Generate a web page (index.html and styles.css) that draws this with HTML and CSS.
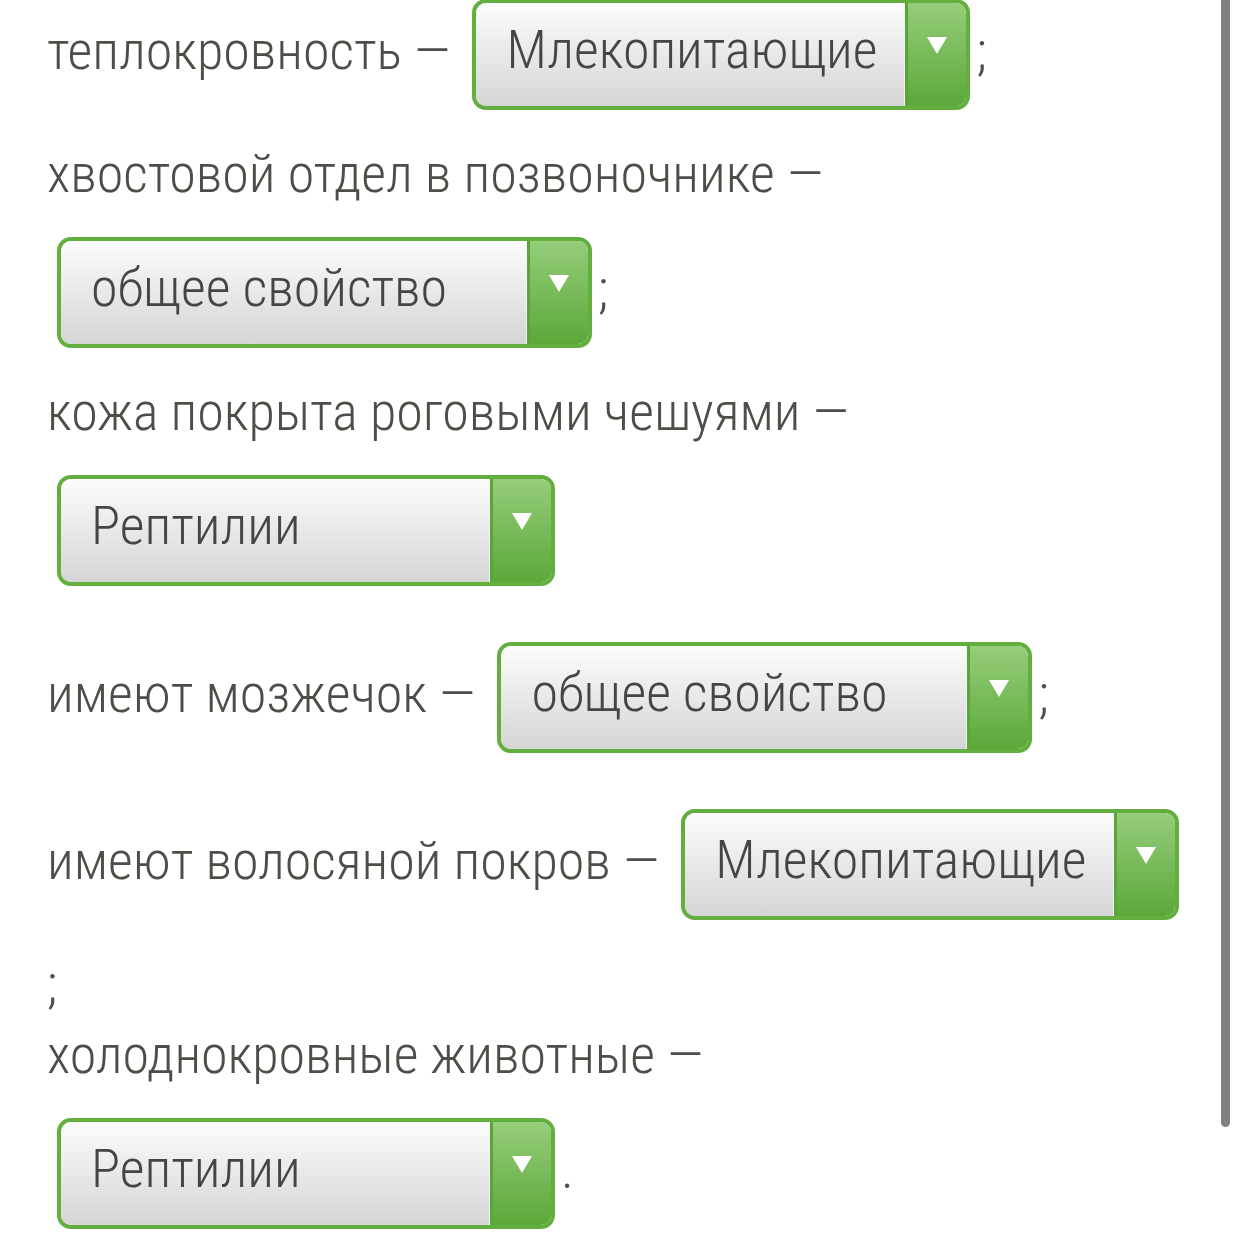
FILE: index.html
```html
<!DOCTYPE html>
<html lang="ru">
<head>
<meta charset="utf-8">
<title>Классы позвоночных</title>
<link rel="stylesheet" href="styles.css">
</head>
<body>
<div class="page">
  <div class="item">теплокровность — <span class="sel"><span class="sel-val">Млекопитающие</span><span class="sel-btn"><svg class="arrow" width="20" height="17" viewBox="0 0 20 17"><polygon points="0,0 20,0 10,17"/></svg></span></span>;</div>
  <div class="item">хвостовой отдел в позвоночнике — <span class="sel sel-wide"><span class="sel-val">общее свойство</span><span class="sel-btn"><svg class="arrow" width="20" height="17" viewBox="0 0 20 17"><polygon points="0,0 20,0 10,17"/></svg></span></span>;</div>
  <div class="item">кожа покрыта роговыми чешуями — <span class="sel"><span class="sel-val">Рептилии</span><span class="sel-btn"><svg class="arrow" width="20" height="17" viewBox="0 0 20 17"><polygon points="0,0 20,0 10,17"/></svg></span></span></div>
  <div class="item">имеют мозжечок — <span class="sel sel-wide"><span class="sel-val">общее свойство</span><span class="sel-btn"><svg class="arrow" width="20" height="17" viewBox="0 0 20 17"><polygon points="0,0 20,0 10,17"/></svg></span></span>;</div>
  <div class="item">имеют волосяной покров — <span class="sel"><span class="sel-val">Млекопитающие</span><span class="sel-btn"><svg class="arrow" width="20" height="17" viewBox="0 0 20 17"><polygon points="0,0 20,0 10,17"/></svg></span></span>;</div>
  <div class="item">холоднокровные животные — <span class="sel"><span class="sel-val">Рептилии</span><span class="sel-btn"><svg class="arrow" width="20" height="17" viewBox="0 0 20 17"><polygon points="0,0 20,0 10,17"/></svg></span></span>.</div>
</div>
<div class="scrollbar"></div>
</body>
</html>
```

FILE: styles.css
```css
html, body {
  margin: 0;
  padding: 0;
  background: #ffffff;
  overflow: hidden;
  height: 100%;
}

.page {
  margin-top: -29px;
  padding-left: 47px;
  width: 1145px;
  font-family: "Roboto Condensed", "Roboto", "Liberation Sans Narrow", sans-serif;
  font-stretch: 75%;
  font-weight: 300;
  font-size: 54px;
  line-height: 71px;
  color: #4d4e47;
}

.item {
  margin: 0;
}

.sel {
  display: inline-flex;
  vertical-align: middle;
  box-sizing: border-box;
  width: 498px;
  height: 111px;
  margin: 28px 6px 28px 10px;
  border: 4px solid #62ae3e;
  border-radius: 14px;
  overflow: hidden;
  line-height: 54px;
}

.sel-wide {
  width: 535px;
}

.sel-val {
  flex: 1;
  padding: 20px 0 0 30px;
  background: linear-gradient(#fcfcfc, #d5d5d5);
  border-right: 1px solid #f4f4f4;
  color: #454641;
  white-space: nowrap;
}

.sel-btn {
  display: flex;
  justify-content: center;
  align-items: flex-start;
  width: 61px;
  padding-top: 34px;
  box-sizing: border-box;
  border-left: 3px solid #59a538;
  background: linear-gradient(#96cd7a, #5ba83a);
}

.arrow {
  display: block;
  fill: #ffffff;
}

.scrollbar {
  position: fixed;
  left: 1221px;
  top: 0;
  width: 9px;
  height: 1127px;
  background: #808080;
  border-radius: 0 0 5px 5px;
}
```
